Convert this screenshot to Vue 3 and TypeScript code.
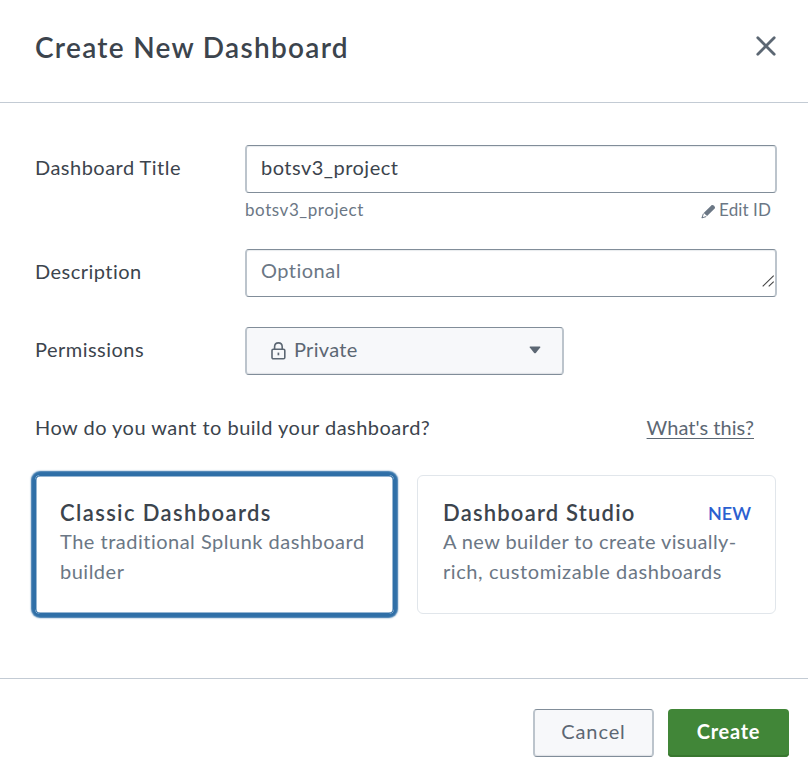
<script setup lang="ts">
import { ref } from 'vue'

interface BuilderOption {
  id: string
  name: string
  lines: string[]
  badge?: string
}

const title = ref('botsv3_project')
const description = ref('')
const selected = ref('classic')

const builders: BuilderOption[] = [
  { id: 'classic', name: 'Classic Dashboards', lines: ['The traditional Splunk dashboard', 'builder'] },
  { id: 'studio', name: 'Dashboard Studio', lines: ['A new builder to create visually-', 'rich, customizable dashboards'], badge: 'NEW' },
]
</script>

<template>
  <section class="modal">
    <header class="modal-header">
      <h1>Create New Dashboard</h1>
      <button class="close" type="button">
        <svg width="20" height="20" viewBox="0 0 20 20"><path d="M1.8 1.8 18.2 18.2M18.2 1.8 1.8 18.2" fill="none" stroke="#5c6773" stroke-width="2.8" stroke-linecap="round" /></svg>
      </button>
    </header>

    <div class="modal-body">
      <div class="row title-row">
        <label class="label">Dashboard Title</label>
        <div class="field">
          <input v-model="title" class="input" type="text" spellcheck="false" />
          <div class="help">
            <span class="help-id">{{ title }}</span>
            <span class="edit">
              <svg width="15" height="15" viewBox="0 0 15 15">
                <path d="M10.3 1.4c1.4-1.4 4.8 1.5 3.4 3.1L6.1 12.1 2.7 8.9Z" fill="#6b7785" />
                <path d="M2.4 9.6 1 13.8l4.2-1.2" fill="none" stroke="#6b7785" stroke-width="1" />
                <path d="m.6 14.3.5-2 1.4 1.4Z" fill="#6b7785" />
              </svg>
              <span>Edit ID</span>
            </span>
          </div>
        </div>
      </div>

      <div class="row description-row">
        <label class="label">Description</label>
        <div class="field textarea-box">
          <input v-model="description" class="input optional" type="text" placeholder="Optional" />
          <svg class="grip" width="13" height="12" viewBox="0 0 13 12"><path d="M.7 11.3 11.7.7M6.7 11.3l5-4.7" fill="none" stroke="#444" stroke-width="1.1" /></svg>
        </div>
      </div>

      <div class="row permissions-row">
        <label class="label">Permissions</label>
        <button class="select" type="button">
          <svg class="lock" width="15" height="18" viewBox="0 0 15 18">
            <rect x="1" y="7.3" width="12.8" height="9.4" rx="1.3" fill="none" stroke="#5c6773" stroke-width="1.6" />
            <path d="M3.6 7.3V4.8C3.6-.5 11.2-.5 11.2 4.8v2.5" fill="none" stroke="#5c6773" stroke-width="1.6" />
            <path d="M7.4 10.6v2.7" stroke="#5c6773" stroke-width="1.7" />
          </svg>
          <span class="select-text">Private</span>
          <svg width="12" height="8" viewBox="0 0 12 8"><path d="M1.1.4h9.8q1 .2.3 1.2L6.8 6.9q-.8.9-1.6 0L.8 1.6Q.1.6 1.1.4Z" fill="#5c6773" /></svg>
        </button>
      </div>

      <div class="question">
        <span class="question-text">How do you want to build your dashboard?</span>
        <a class="link">What's this?</a>
      </div>

      <div class="cards">
        <article v-for="b in builders" :key="b.id" class="card" :class="[b.id, { active: selected === b.id }]" @click="selected = b.id">
          <div class="card-head">
            <h2>{{ b.name }}</h2>
            <span v-if="b.badge" class="badge">{{ b.badge }}</span>
          </div>
          <p v-for="(line, i) in b.lines" :key="line" :class="'line-' + i">{{ line }}</p>
        </article>
      </div>
    </div>

    <footer class="modal-footer">
      <button class="btn cancel" type="button">Cancel</button>
      <button class="btn create" type="button">Create</button>
    </footer>
  </section>
</template>

<style>
body { background: #fff; }
</style>

<style scoped>
* { box-sizing: border-box; }
.modal {
  width: 808px;
  height: 774px;
  display: flex;
  flex-direction: column;
  background: #fff;
  color: #3c444d;
  font: 400 20px/30px Lato, "Open Sans", sans-serif;
  letter-spacing: 0.48px;
  font-variant-ligatures: none;
  overflow: hidden;
}
button, input { font: inherit; letter-spacing: inherit; color: inherit; margin: 0; }
svg { display: block; flex: none; }
.modal-header {
  height: 103px;
  flex: none;
  display: flex;
  justify-content: space-between;
  align-items: flex-start;
  padding: 27px 31px 0 35px;
  border-bottom: 1px solid #c3cbd4;
}
h1 { margin: 0; font-size: 28px; line-height: 40px; font-weight: 600; letter-spacing: 1.3px; }
.close { padding: 0; border: 0; background: none; margin: 9px 1px 0 0; }
.modal-body { height: 575px; flex: none; padding: 42px 31px 0 35px; }
.row { display: flex; align-items: flex-start; }
.label { width: 210px; flex: none; padding-top: 7px; }
.field { flex: 1; }
.title-row { height: 104px; }
.description-row { height: 78px; }
.permissions-row { height: 85px; }
.input {
  display: block;
  width: 100%;
  height: 48px;
  padding: 0 14px 4px;
  border: solid #818d99;
  border-width: 1px 2px;
  border-color: #818d99 #bcc4cc;
  border-radius: 4px;
  background: #fff;
  box-shadow: inset 0 2px 1px -1px #e8ebee;
  outline: 0;
}
.optional { padding-bottom: 6px; }
.input::placeholder { color: #6b7785; opacity: 1; }
.textarea-box { position: relative; }
.grip { position: absolute; right: 2px; bottom: 10px; }
.help {
  display: flex;
  justify-content: space-between;
  padding: 4px 6px 0 0;
  font-size: 17px;
  line-height: 26px;
  color: #6b7785;
}
.help-id { letter-spacing: 0.56px; }
.edit { display: flex; align-items: center; gap: 3px; letter-spacing: 0.1px; }
.edit svg { margin-top: 3px; }
.select {
  width: 319px;
  height: 48px;
  display: flex;
  align-items: center;
  padding: 0 21px 2px 24px;
  border: solid #818d99;
  border-width: 1px 2px;
  border-color: #818d99 #bcc4cc;
  border-radius: 4px;
  background: #f7f8fa;
  box-shadow: inset 0 -2px 1px -1px #dfe2e6;
  color: #5c6773;
}
.lock { margin-top: 1px; }
.select-text { flex: 1; margin: -2px 0 0 8px; text-align: left; letter-spacing: 0.3px; }
.question { height: 63px; display: flex; justify-content: space-between; padding-right: 23px; }
.link { color: #5c6773; letter-spacing: 0.04px; text-decoration: underline; text-decoration-thickness: 1px; text-underline-offset: 3px; }
.cards { display: grid; grid-template-columns: 359px 359px; gap: 23px; }
.card {
  height: 139px;
  padding: 22px 24px 0 25px;
  border: 1px solid #e1e6eb;
  border-radius: 6px;
}
.card.active { padding-left: 24px; border-color: #2f6fa7; border-radius: 5px; box-shadow: 0 0 1.5px 4px #2f6fa7, inset 0 0 0 0.5px #2f6fa7; }
.card-head { display: flex; justify-content: space-between; align-items: center; height: 28px; }
h2 { margin: 0; font-size: 22px; line-height: 30px; font-weight: 600; letter-spacing: 1.38px; padding-top: 2px; }
.studio h2 { letter-spacing: 1.2px; }
.badge { font-size: 18px; font-weight: 600; color: #2b5fd0; letter-spacing: 0; padding-top: 1px; }
p { margin: 0; white-space: nowrap; color: #6b7785; letter-spacing: 0.5px; }
.studio .line-0 { letter-spacing: 0.4px; }
.studio .line-1 { letter-spacing: 0.58px; }
.modal-footer {
  flex: 1;
  display: flex;
  justify-content: flex-end;
  gap: 14px;
  padding: 30px 19px 0 0;
  border-top: 1px solid #c3cbd4;
}
.btn { width: 121px; height: 48px; padding: 0 0 4px; border-radius: 4px; }
.cancel {
  border: solid #818d99;
  border-width: 1px 2px;
  border-color: #818d99 #bcc4cc;
  background: #f7f8fa;
  box-shadow: inset 0 -2px 1px -1px #dfe2e6;
  color: #5c6773;
  letter-spacing: 0.9px;
}
.create { border: 0; background: #418638; box-shadow: inset 0 -3px 0 -1px #38772f; color: #fff; font-weight: 700; letter-spacing: 0.75px; }
</style>
